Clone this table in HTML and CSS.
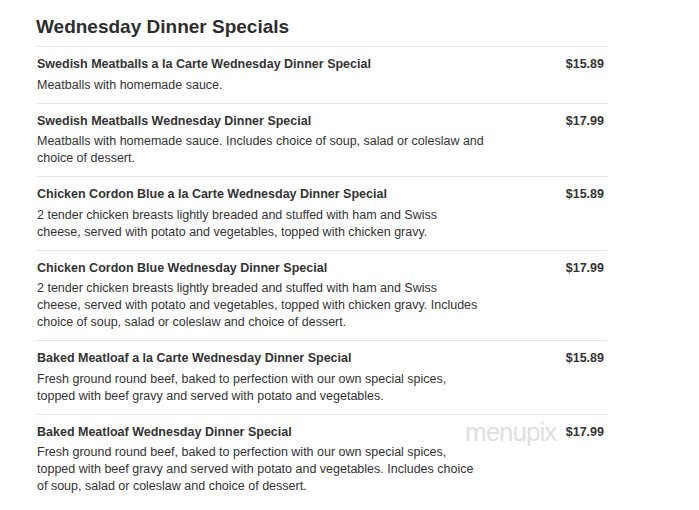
FILE: index.html
```html
<!DOCTYPE html>
<html>
<head>
<meta charset="utf-8">
<link rel="stylesheet" href="styles.css">
</head>
<body>
<div class="menu">
  <h2 class="heading">Wednesday Dinner Specials</h2>
  <div class="item">
    <div class="info">
      <div class="name">Swedish Meatballs a la Carte Wednesday Dinner Special</div>
      <div class="desc">Meatballs with homemade sauce.</div>
    </div>
    <div class="price">$15.89</div>
  </div>
  <div class="item">
    <div class="info">
      <div class="name">Swedish Meatballs Wednesday Dinner Special</div>
      <div class="desc">Meatballs with homemade sauce. Includes choice of soup, salad or coleslaw and choice of dessert.</div>
    </div>
    <div class="price">$17.99</div>
  </div>
  <div class="item">
    <div class="info">
      <div class="name">Chicken Cordon Blue a la Carte Wednesday Dinner Special</div>
      <div class="desc">2 tender chicken breasts lightly breaded and stuffed with ham and Swiss cheese, served with potato and vegetables, topped with chicken gravy.</div>
    </div>
    <div class="price">$15.89</div>
  </div>
  <div class="item">
    <div class="info">
      <div class="name">Chicken Cordon Blue Wednesday Dinner Special</div>
      <div class="desc">2 tender chicken breasts lightly breaded and stuffed with ham and Swiss cheese, served with potato and vegetables, topped with chicken gravy. Includes choice of soup, salad or coleslaw and choice of dessert.</div>
    </div>
    <div class="price">$17.99</div>
  </div>
  <div class="item">
    <div class="info">
      <div class="name">Baked Meatloaf a la Carte Wednesday Dinner Special</div>
      <div class="desc">Fresh ground round beef, baked to perfection with our own special spices, topped with beef gravy and served with potato and vegetables.</div>
    </div>
    <div class="price">$15.89</div>
  </div>
  <div class="item last">
    <div class="info">
      <div class="name">Baked Meatloaf Wednesday Dinner Special</div>
      <div class="desc">Fresh ground round beef, baked to perfection with our own special spices, topped with beef gravy and served with potato and vegetables. Includes choice of soup, salad or coleslaw and choice of dessert.</div>
    </div>
    <div class="price">$17.99</div>
    <span class="watermark">menupix</span>
  </div>
</div>
</body>
</html>
```

FILE: styles.css
```css
* { box-sizing: border-box; }
body {
  margin: 0;
  background: #fff;
  font-family: "Liberation Sans", Arial, sans-serif;
  color: #333;
}
.menu {
  margin-left: 36px;
  width: 571px;
  padding-top: 15px;
}
.heading {
  margin: 0;
  font-size: 19px;
  line-height: 24px;
  font-weight: bold;
  color: #2e2e2e;
  padding-bottom: 7px;
  border-bottom: 1px solid #e6e6e6;
}
.item {
  position: relative;
  display: flex;
  justify-content: space-between;
  align-items: flex-start;
  padding: 9px 3px 9px 1px;
  border-bottom: 1px solid #e6e6e6;
}
.item.last { border-bottom: none; }
.info { width: 447px; }
.name {
  font-size: 12.5px;
  font-weight: bold;
  line-height: 16px;
  margin-bottom: 4.5px;
}
.desc {
  font-size: 12.5px;
  line-height: 17px;
}
.price {
  font-size: 12.5px;
  font-weight: bold;
  line-height: 16px;
}
.watermark {
  position: absolute;
  left: 429px;
  top: 2px;
  font-size: 26px;
  font-weight: 300;
  color: #e0e0e0;
  letter-spacing: -1px;
}
```
